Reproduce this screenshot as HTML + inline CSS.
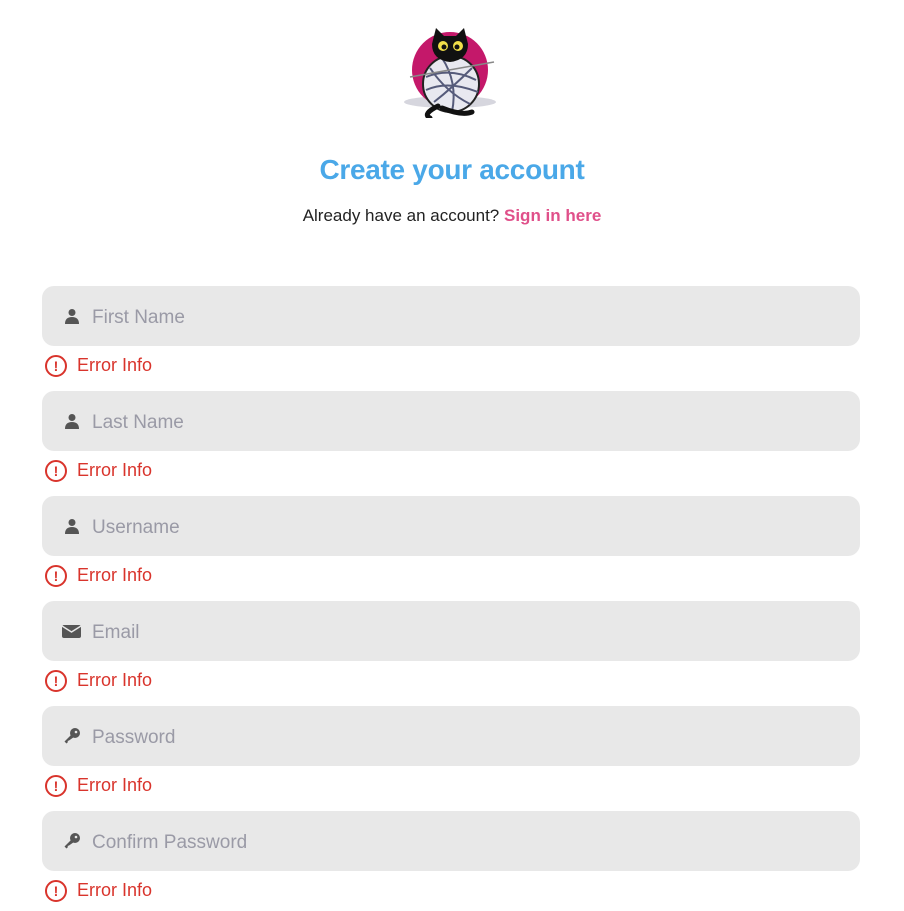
<!DOCTYPE html>
<html><head><meta charset="utf-8"><style>
body{margin:0;width:904px;height:911px;background:#fff;font-family:"Liberation Sans",sans-serif;position:relative;overflow:hidden}
.logo{position:absolute;left:402px;top:22px}
h1{position:absolute;top:154px;left:0;width:904px;text-align:center;margin:0;font-size:28px;color:#4aa8e8;font-weight:bold;letter-spacing:-0.3px}
.sub{position:absolute;top:206px;left:0;width:904px;text-align:center;font-size:17px;color:#222}
.sub b{color:#e0508a}
.f{position:absolute;left:42px;width:818px;height:60px;background:#e8e8e8;border-radius:12px}
.f svg{position:absolute;left:22px;top:22px}
.f span{position:absolute;left:50px;top:21px;font-size:19px;color:#9a9aa6}
.e{position:absolute;left:45px;height:24px;font-size:18px;color:#d9342c}
.e i{position:absolute;left:0;top:1px;width:22px;height:22px;border:2px solid #d9342c;border-radius:50%;box-sizing:border-box;font-style:normal;font-size:14px;font-weight:bold;text-align:center;line-height:19px}
.e span{position:absolute;left:32px;top:1px;white-space:nowrap}
</style></head><body>
<svg class="logo" width="100" height="96" viewBox="0 0 100 96">
<ellipse cx="48" cy="80" rx="46" ry="6" fill="#d6d6de"/>
<circle cx="48" cy="48" r="38" fill="#c4186a"/>
<circle cx="49" cy="62" r="28" fill="#e8e8f0" stroke="#222" stroke-width="2"/>
<path d="M24 55 Q48 45 74 58 M24 68 Q46 58 76 70 M32 80 Q50 66 70 46 M40 36 Q56 60 50 90 M28 46 Q44 70 68 82" stroke="#555a7a" stroke-width="2" fill="none"/>
<line x1="8" y1="55" x2="92" y2="40" stroke="#888" stroke-width="1.5"/>
<path d="M30 22 L34 6 L42 14 L54 14 L62 6 L66 22 Q66 38 48 40 Q30 38 30 22Z" fill="#111"/>
<ellipse cx="41" cy="24" rx="5" ry="5" fill="#f2e04a"/><ellipse cx="56" cy="24" rx="5" ry="5" fill="#f2e04a"/>
<circle cx="42" cy="25" r="2.5" fill="#111"/><circle cx="55" cy="25" r="2.5" fill="#111"/>
<path d="M36 84 Q20 92 28 96 M40 86 Q60 94 70 90" stroke="#111" stroke-width="5" fill="none" stroke-linecap="round"/>
</svg>
<h1>Create your account</h1>
<div class="sub">Already have an account? <b>Sign in here</b></div>

<div class="f" style="top:286px"><svg width="16" height="16" viewBox="0 0 16 16"><circle cx="8" cy="4.5" r="3.5" fill="#555"/><path d="M1 16 Q1 9 8 9 Q15 9 15 16Z" fill="#555"/></svg><span>First Name</span></div>
<div class="e" style="top:354px"><i>!</i><span>Error Info</span></div>
<div class="f" style="top:391px"><svg width="16" height="16" viewBox="0 0 16 16"><circle cx="8" cy="4.5" r="3.5" fill="#555"/><path d="M1 16 Q1 9 8 9 Q15 9 15 16Z" fill="#555"/></svg><span>Last Name</span></div>
<div class="e" style="top:459px"><i>!</i><span>Error Info</span></div>
<div class="f" style="top:496px"><svg width="16" height="16" viewBox="0 0 16 16"><circle cx="8" cy="4.5" r="3.5" fill="#555"/><path d="M1 16 Q1 9 8 9 Q15 9 15 16Z" fill="#555"/></svg><span>Username</span></div>
<div class="e" style="top:564px"><i>!</i><span>Error Info</span></div>
<div class="f" style="top:601px"><svg width="19" height="16" viewBox="0 0 19 16" style="left:20px"><rect x="0" y="2" width="19" height="13" rx="2" fill="#555"/><path d="M0 3 L9.5 9 L19 3" stroke="#e8e8e8" stroke-width="1.5" fill="none"/></svg><span>Email</span></div>
<div class="e" style="top:669px"><i>!</i><span>Error Info</span></div>
<div class="f" style="top:706px"><svg width="16" height="16" viewBox="0 0 16 16"><circle cx="11" cy="5" r="5" fill="#555"/><path d="M8 6 L0.5 13.5 L2.5 15.5 L4 14 L3.5 13 L5 12.5 L10 9Z" fill="#555"/><circle cx="12" cy="4" r="1.3" fill="#e8e8e8"/></svg><span>Password</span></div>
<div class="e" style="top:774px"><i>!</i><span>Error Info</span></div>
<div class="f" style="top:811px"><svg width="16" height="16" viewBox="0 0 16 16"><circle cx="11" cy="5" r="5" fill="#555"/><path d="M8 6 L0.5 13.5 L2.5 15.5 L4 14 L3.5 13 L5 12.5 L10 9Z" fill="#555"/><circle cx="12" cy="4" r="1.3" fill="#e8e8e8"/></svg><span>Confirm Password</span></div>
<div class="e" style="top:879px"><i>!</i><span>Error Info</span></div>
</body></html>
